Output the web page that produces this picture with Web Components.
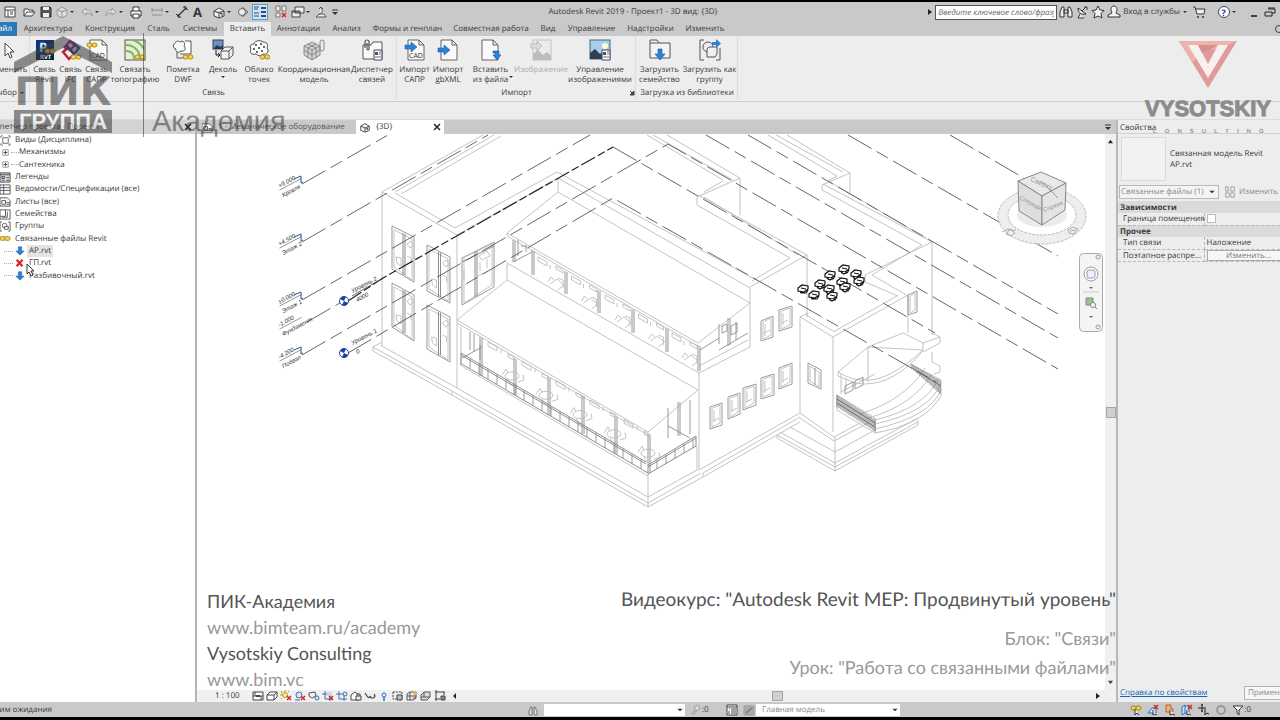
<!DOCTYPE html>
<html lang="ru">
<head>
<meta charset="utf-8">
<title>Autodesk Revit 2019 - Проект1 - 3D вид: {3D}</title>
<style>
html, body { margin: 0; height: 100%; }
body { background: #000; font: 8px/12px "Open Sans", "Noto Sans", sans-serif; color: #3a3a3a; overflow: hidden; text-rendering: geometricPrecision; }
</style>
</head>
<body>
<revit-app></revit-app>
<script>
const G = '#555', Y = '#d9a520', B = '#2f7fd6', R = '#d02a2a';
const chain = (x, y) => `<g fill="#f6d45a" stroke="#b98a10" stroke-width="1"><rect x="${x}" y="${y}" width="5" height="4" rx="2"/><rect x="${x + 5}" y="${y}" width="5" height="4" rx="2"/></g>`;
const page = (x, y, w, h) => `<path d="M${x} ${y}h${w - 5}l5 5v${h - 5}h${-w}zM${x + w - 5} ${y}v5h5" fill="#fafafa" stroke="${G}" stroke-width=".9"/>`;
const arrowR = (x, y) => `<path d="M${x} ${y}h6v-3l6 5-6 5v-3h-6z" fill="${B}" stroke="#1a5aa8" stroke-width=".6"/>`;
const arrowD = (x, y) => `<path d="M${x} ${y}h4v5h3l-5 6-5-6h3z" fill="${B}" stroke="#1a5aa8" stroke-width=".6"/>`;
const redX = (x, y) => `<path d="M${x} ${y}l4 4m0-4l-4 4" stroke="${R}" stroke-width="1.5"/>`;
const house = `<path d="M2 6l5-3 5 3v5l-5 2-5-2zM2 6l5 2 5-2M7 8v5M8 9l2-1v3" fill="#f2f2f2" stroke="#444"/>`;
/* name: [viewBox size, markup] */
const ICONS = {
  pointer: [22, `<path d="M8 4v13l3-3 2 5 2-1-2-5h4z" fill="#fff" stroke="#444"/>`],
  revit: [22, `<rect x="2" y="1" width="18" height="20" fill="#12356f"/><path d="M2 15h18v6H2z" fill="#0a2148"/><text x="5" y="13" font-size="13" font-weight="700" fill="#dbe9fb">P</text><text x="6" y="20" font-size="6" font-weight="700" fill="#fff">RVT</text>${chain(11, 10)}`],
  ifc: [22, `<g fill="none" stroke-width="2.4"><path d="M4 9l6-7 5 4-5 5" stroke="#c01f78"/><path d="M12 3l7 6-5 6-4-4" stroke="#2d4f9e"/><path d="M9 8l-6 5 6 7 4-4" stroke="#c21d38"/><path d="M6 6l8 9" stroke="#5a3090"/></g>${chain(11, 16)}`],
  cadlink: [22, page(4, 1, 17, 20) + `<text x="5" y="19" font-size="7" fill="#222">CAD</text>` + chain(1, 4)],
  topo: [22, `<rect x="1" y="1" width="20" height="20" fill="#e4efd8" stroke="${G}"/><g fill="none" stroke="#7fb45c" stroke-width="2"><path d="M2 6c8 0 14 6 14 14M2 12c5 0 8 3 8 8M9 1c6 2 10 6 12 11"/></g>${chain(11, 16)}`],
  dwf: [22, `<path d="M13 2h6v13H8" fill="#fff" stroke="${G}"/><path d="M4 3c2-2 4 0 4 0 3-2 6 1 4 4 3 3 0 6-3 5-3 3-6 0-5-2-4-1-3-5 0-7z" fill="#f7f7f7" stroke="${G}"/><path d="M5 13v6h6" fill="none" stroke="${G}"/>${chain(11, 16)}`],
  decal: [22, `<rect x="1" y="1" width="10" height="9" fill="#6c93bf" stroke="#345"/><path d="M1 10l4-4 3 2 3-2v4z" fill="#223a52"/><path d="M9 12l4-4h8v8l-4 4H9z" fill="#f2f2f2" stroke="${G}"/><path d="M9 12h8v8m0-8l4-4" fill="none" stroke="${G}"/><path d="M4 11v5h3M6 14l2 2-2 2" fill="none" stroke="#111"/>`],
  cloud: [22, `<path d="M6 5c1-4 7-4 9-2 5 0 5 4 4 6 3 4-1 7-4 6-3 3-6 1-7 0-4 1-7-1-5-5-2-3 0-5 3-5z" fill="#fff" stroke="#444"/><g fill="#333"><circle cx="8" cy="6" r="1"/><circle cx="13" cy="5" r="1"/><circle cx="6" cy="10" r="1"/><circle cx="11" cy="9" r="1"/><circle cx="16" cy="8" r="1"/><circle cx="14" cy="12" r="1"/><circle cx="9" cy="13" r="1"/></g>${chain(12, 16)}`],
  coord: [22, `<g fill="#d2d2d2" stroke="#777" stroke-width=".8"><path d="M1 7l8-4 8 4v9l-8 5-8-5z"/><path d="M1 7l8 4 8-4M9 11v10M1 11l8 5 8-5M5 5l8 4v10M13 5L5 9v10" fill="none"/></g><rect x="17" y="1" width="4" height="11" rx="2" fill="none" stroke="#888"/>`],
  manager: [22, `<path d="M2 20V6h8l2-3h9v17z" fill="#fafafa" stroke="${G}"/><path d="M4 9V3a2 2 0 014 0v7a1 1 0 01-2 0V4" fill="none" stroke="#555" stroke-width="1.2"/><path d="M13 11h8v10h-8z" fill="#fff" stroke="#446"/><path d="M14 13h3v3h-3z" fill="#456"/><path d="M18 13h2M18 15h2M14 18h6" stroke="#667"/>`],
  cadimp: [22, page(4, 1, 16, 20) + `<text x="5" y="19" font-size="7" fill="#222">CAD</text>` + arrowR(1, 6)],
  xmlimp: [22, page(4, 1, 16, 20) + arrowR(1, 9)],
  insert: [22, page(2, 1, 16, 20) + `<path d="M13 12h6v4h2l-4 5-4-5h2v-2h-2z" fill="${B}" stroke="#1a5aa8" stroke-width=".6"/>`],
  image: [22, `<g opacity=".5"><rect x="3" y="1" width="18" height="20" fill="#ececec" stroke="#999"/><path d="M3 21v-6l5-4 5 5 4-3 4 4v4z" fill="#8d8d8d"/><path d="M1 5h6V2l5 5-5 5V9H1z" fill="#ccc" stroke="#888"/></g>`],
  images: [22, `<rect x="1" y="1" width="20" height="19" fill="#a9cdec" stroke="#566"/><circle cx="16" cy="7" r="3" fill="#fff9d8"/><path d="M1 20v-6l5-4 5 5 3-2v7z" fill="#30404e"/><path d="M13 11h8v10h-8z" fill="#fff" stroke="#446"/><path d="M14 13h3v3h-3z" fill="#456"/><path d="M18 13h2M18 15h2M14 18h6" stroke="#667"/>`],
  family: [22, `<path d="M1 19V1h7l2 3h11v15z" fill="#f3f3f3" stroke="${G}"/><path d="M10 4H1" stroke="${G}"/>${arrowD(9, 10)}`],
  group: [22, `<path d="M5 1H1v20h4M17 21h4V9" fill="none" stroke="${G}"/><circle cx="9" cy="8" r="5" fill="none" stroke="${G}"/><path d="M8 10l2-2h8v7l-2 3H8z" fill="#f0f0f0" stroke="${G}"/><path d="M13 3h4V0l5 4.500-5 4.500V6h-4z" fill="${B}"/>`],
  appmenu: [14, `<path d="M2 2h10v10H2zM2 5h10M5 5v7" fill="#fff" stroke="#444"/><path d="M7 7h3M7 9h3" stroke="#444"/>`],
  open: [14, `<path d="M2 11V4h4l1 1h4v2M2 11l3-4h8l-3 4z" fill="#f3f3f3" stroke="#444"/>`],
  save: [14, `<path d="M2 2h9l1 1v9H2z" fill="#555" stroke="#333"/><path d="M4 2h6v3H4zM4 8h6v4H4z" fill="#eee"/>`],
  sync: [14, `<path d="M2 5l5-3 5 3v5l-5 3-5-3zM2 5l5 2 5-2M7 7v6" fill="#ddd" stroke="#999"/>`],
  undo: [14, `<path d="M6 3L2 7l4 3V8c3 0 5 0 6 3 0-4-2-6-6-6z" fill="#ddd" stroke="#999"/>`],
  redo: [14, `<path d="M8 3l4 4-4 3V8c-3 0-5 0-6 3 0-4 2-6 6-6z" fill="#ddd" stroke="#999"/>`],
  print: [14, `<path d="M4 6V2h6v4M2 6h10v5H2z" fill="#fff" stroke="#333"/><path d="M4 9h6v4H4z" fill="#fff" stroke="#333"/>`],
  measure: [14, `<path d="M2 3v4M12 3v4M2 5h10" fill="none" stroke="#888"/><path d="M2 9h10v2H2z" fill="#aaa"/>`],
  dim: [14, `<path d="M3 11l8-8" stroke="#333" stroke-width="1.200"/><path d="M1 9l4 4M9 1l4 4M3 9v3h3M8 2h3v3" stroke="#333"/>`],
  letter: [14, `<text x="2" y="12" font-size="13" font-weight="700" fill="#333">A</text>`],
  house: [14, house],
  section: [14, `<circle cx="6" cy="7" r="3.500" fill="#eee" stroke="#666"/><path d="M6 2l6 5-6 5" fill="none" stroke="#666"/>`],
  thin: [14, `<path d="M1 2h5M1 4h4M1 8h5M1 11h5" stroke="#2b4c74"/><path d="M8 3h5M8 7h5M8 11h5" stroke="#2b4c74" stroke-width="1.800"/>`],
  closeh: [14, `<path d="M2 1h4v5H2zM8 1h4v5H8zM2 8h4v4H2z" fill="#eee" stroke="#777"/>${redX(8, 8)}`],
  windows: [14, `<path d="M4 2h9v6H4zM1 6h8v6H1z" fill="#eee" stroke="#444"/><path d="M1 7h8" stroke="#444"/>`],
  thin2: [14, `<path d="M2 12h10l-2-3H5zM5 9c4-1 4-4 2-6M5 4l2-2 2 2" fill="#eee" stroke="#555"/>`],
  more: [14, `<path d="M4 5h6" stroke="#333"/><path d="M4 7h6l-3 3z" fill="#333"/>`],
  dd: [6, `<path d="M1 2h4L3 4z" fill="#333"/>`],
  right: [6, `<path d="M1 0l4 3-4 3z" fill="#222"/>`],
  left: [6, `<path d="M4 0L1 3l3 3z" fill="#222"/>`],
  up: [6, `<path d="M0 5h6L3 1z" fill="#222"/>`],
  down: [6, `<path d="M0 1h6L3 5z" fill="#444"/>`],
  corner: [6, `<path d="M1 1l3 3M5 1v4H1z" stroke="#444" fill="#444"/>`],
  binoc: [14, `<path d="M1 12V7l2-5h2v10zM9 12V2h2l2 5v5zM5 5h4v3H5z" fill="#eee" stroke="#333"/>`],
  sat: [14, `<path d="M3 3c0 5 3 7 8 6zM7 6l4-4M9 2h3v3M5 9l-2 4h6" fill="#eee" stroke="#333"/>`],
  star: [14, `<path d="M7 1l2 4 4 .5-3 3 1 4.500-4-2-4 2 1-4.500-3-3L5 5z" fill="#f3f3f3" stroke="#333"/>`],
  user: [14, `<path d="M7 1c3 0 3 3 3 4s-1 3-1 3l4 2v2H1v-2l4-2S4 6 4 5s0-4 3-4z" fill="#f3f3f3" stroke="#333"/>`],
  cart: [14, `<path d="M1 2h2l2 7h7l1-5H4" fill="#eee" stroke="#335"/><circle cx="6" cy="12" r="1" fill="#335"/><circle cx="11" cy="12" r="1" fill="#335"/>`],
  help: [14, `<circle cx="7" cy="7" r="5.500" fill="#fff" stroke="#446"/><text x="4.500" y="10.500" font-size="9" font-weight="700" fill="#23409a">?</text>`],
  min: [14, `<path d="M4 11h6" stroke="#222" stroke-width="1.600"/>`],
  restore: [14, `<path d="M5 4h7v4H9M2 7h7v4H2zM5 3h7" fill="none" stroke="#222"/>`],
  close: [8, `<path d="M1 1l6 6M7 1L1 7" stroke="#222" stroke-width="1.500"/>`],
  views: [12, `<path d="M3 3h6v6H3z" fill="#fff" stroke="#666"/><path d="M1 3V1h2M9 1h2v2M11 9v2H9M3 11H1V9" fill="none" stroke="#666"/>`],
  plus: [12, `<path d="M3 3h6v6H3z" fill="#fff" stroke="#999"/><path d="M4 6h4M6 4v4" stroke="#444"/>`],
  legend: [12, `<path d="M0 1h11v10H0z" fill="#ddd" stroke="#444"/><path d="M0 3h11M2 5h3v2H2zM7 6h3M2 9h3M7 9h3" stroke="#444" fill="none"/>`],
  sched: [12, `<path d="M0 1h11v10H0zM0 4h11M0 7h11M4 1v10" fill="#fff" stroke="#555"/>`],
  sheet: [12, `<path d="M0 2h8l3 3v6H0zM2 5h4v4H2zM7 7h4M7 9h4" fill="#fff" stroke="#555"/>`],
  fam: [12, `<path d="M0 1h11v10H0zM6 1v7H0M8 3v6H2" fill="#fff" stroke="#555"/>`],
  grp: [12, `<path d="M2 1H0v10h2M9 1h2v10H9" fill="none" stroke="#555"/><circle cx="5" cy="5" r="2.500" fill="none" stroke="#555"/><path d="M5 6h4v3H5z" fill="#fff" stroke="#555"/>`],
  link: [12, `<g fill="#f6d45a" stroke="#a87d10"><rect x="0" y="4" width="6" height="4" rx="2"/><rect x="5" y="4" width="6" height="4" rx="2"/></g>`],
  loaded: [12, `<path d="M4 1h4v5h3l-5 5-5-5h3z" fill="${B}" stroke="#1a5aa8" stroke-width=".6"/>`],
  missing: [12, `<path d="M2 2l7 8M9 2l-7 8" stroke="#d22" stroke-width="2.600"/>`],
  edittype: [14, `<path d="M2 1h3v5H2zM8 1h4v5H8zM2 8h4v5H2zM8 8h4v5H8z" fill="none" stroke="#999"/>`],
  detail: [12, `<path d="M1 2h10v8H1zM1 6h10M3 2v4M9 6v4" fill="#fff" stroke="#444"/><path d="M4 6h4" stroke="#444" stroke-width="2"/>`],
  style: [12, `<path d="M1 5l3-3h7v5l-3 3H1zM1 5h7v5M8 5l3-3" fill="#fff" stroke="#444"/>`],
  sun: [12, `<circle cx="5" cy="5" r="2.500" fill="#fbe7a0" stroke="#c8961a"/><path d="M5 0v2M0 5h2M1 1l1 2M9 1L8 2M1 9l1-1" stroke="#c8961a"/>${redX(7, 6)}`],
  shadow: [12, `<circle cx="5" cy="5" r="3" fill="#dbe9f7" stroke="#3973ad"/><path d="M1 10h5" stroke="#3973ad"/>${redX(7, 6)}`],
  render: [12, `<path d="M1 3l6-1 1 4-4 2-3-2z" fill="#eee" stroke="#555"/><circle cx="9" cy="8" r="2" fill="#dbe9f7" stroke="#3973ad"/>`],
  cropx: [12, `<path d="M3 1v8h8M0 4h8v7" fill="none" stroke="#3973ad"/><path d="M5 2h5v4H5z" fill="#ccdcec"/>${redX(7, 6)}`],
  crop: [12, `<path d="M3 1v8h8M0 4h8v7" fill="none" stroke="#3973ad"/><circle cx="9" cy="4" r="2" fill="#dbe9f7" stroke="#3973ad"/>`],
  lock: [12, `<path d="M1 5l4-3 4 3v5H1z" fill="#fff" stroke="#444"/><path d="M6 6h5v4H6zM7 6V4h3v2" fill="#eee" stroke="#444"/>`],
  glasses: [12, `<path d="M1 3l2 3c2 3 3 1 3 0 1 3 4 3 5 0l-1-2" fill="none" stroke="#444" stroke-width="1.200"/>`],
  bulb: [12, `<circle cx="6" cy="5" r="2" fill="#eaf3fc" stroke="#2c6cc0"/><path d="M6 7v4" stroke="#2c6cc0" stroke-width="1.500"/>`],
  temp: [12, `<path d="M1 2h9v7H1z" fill="#eee" stroke="#444" stroke-dasharray="2 1"/><path d="M5 5h5v5H5z" fill="#bbb" stroke="#444"/>`],
  analytic: [12, `<path d="M1 4l3-2h6v6l-3 2H1zM1 6h9M4 2v8" fill="#eee" stroke="#555"/><circle cx="9" cy="3" r="2" fill="#f0b050"/><path d="M7 8h3" stroke="#b33"/>`],
  disp: [12, `<path d="M1 5l3-3h6v5l-3 3H1zM1 7h9M4 2v5" fill="#ddd" stroke="#555"/>`],
  constr: [12, `<path d="M1 2h10M2 0v11M1 9h5M10 2v3" stroke="#444" fill="none"/><path d="M7 6h4v4H7z" fill="#888" stroke="#444"/>`],
  press: [12, `<path d="M2 11V7l2-4h1v8zM7 11V3h1l2 4v4z" fill="#ddd" stroke="#777"/>`],
  key: [12, `<path d="M2 10l4-4M4 11l4-5" stroke="#999"/><circle cx="8" cy="4" r="2.500" fill="#ddd" stroke="#999"/>`],
  list: [12, `<path d="M1 1h10v10H1zM1 3h10M3 5h1M5 5h5M5 7h5M5 9h5M3 7v3" fill="#fff" stroke="#444"/>`],
  list2: [12, `<path d="M1 2h10v9H1z" fill="#aaa" stroke="#999"/><path d="M3 9l6-5" stroke="#777" stroke-width="1.500"/>`],
  sel1: [12, `<g fill="#f6d45a" stroke="#a87d10"><rect x="1" y="2" width="5" height="4" rx="2"/><rect x="6" y="2" width="5" height="4" rx="2"/></g><path d="M5 5v6l2-2 2 2" fill="#fff" stroke="#333"/>`],
  sel2: [12, `<path d="M1 9l4-5h4v5z" fill="#cfe2f6" stroke="#2c6cc0"/>${redX(7, 1)}<path d="M6 6v5l2-1 2 1" fill="#fff" stroke="#333"/>`],
  sel3: [12, `<path d="M2 1h5v4h2v3H2z" fill="#f0b27a" stroke="#b5651d"/><path d="M6 6v5l2-1 3 1" fill="#fff" stroke="#333"/>`],
  sel4: [12, `<path d="M1 3l3-2v8l-3 2zM4 2h4v7H4" fill="#cfe2f6" stroke="#2c6cc0"/>${redX(7, 1)}<path d="M6 6v5l2-1 2 1" fill="#fff" stroke="#333"/>`],
  drag: [12, `<path d="M4 0v8M0 4h8M3 1h2M3 7h2M7 5v6l2-2 2 1" stroke="#222" fill="none"/>`],
  gear: [12, `<circle cx="6" cy="6" r="4" fill="none" stroke="#999" stroke-width="1.800"/>`],
  filter: [12, `<path d="M1 2h10L7 6v5l-2-2V6z" fill="#fff" stroke="#333"/>`],
};

/* Base class: each element renders its own open shadow root. */
class El extends HTMLElement {
  connectedCallback() {
    if (this.shadowRoot) return;
    this.attachShadow({ mode: 'open' }).innerHTML = `<style>*{box-sizing:border-box}button,input,select{font:inherit;color:inherit;margin:0;padding:0;border:0;background:none;text-rendering:inherit}${this.css()}</style>${this.html()}`;
  }
  a(n) { return this.getAttribute(n) || ''; }
}
const def = (name, css, html) => customElements.define(name, class extends El {
  css() { return css; }
  html() { return html(this); }
});
const ic = (n, s) => `<rv-icon name="${n}" style="--s:${s || (ICONS[n][0])}px"></rv-icon>`;

def('rv-icon', `:host{display:block;flex:none;width:var(--s);height:var(--s)}svg{display:block;width:100%;height:100%}`,
  e => { const [v, m] = ICONS[e.a('name')]; return `<svg viewBox="0 0 ${v} ${v}" fill="none" font-family="Open Sans, sans-serif" aria-hidden="true">${m}</svg>`; });

def('quick-access', `
:host{display:flex;align-items:center;height:20px;background:#c9c9c9;position:relative;padding-left:3px}
.tools,.right{display:flex;align-items:center}
.tools button{margin-right:var(--g)}
button{display:flex;align-items:center}
.on{background:#cfe4f7;outline:1px solid #5a9bd5}
h1{position:absolute;left:0;right:0;text-align:center;margin:0;font:inherit;pointer-events:none;padding-right:14px}
.right{margin-left:auto;gap:2px;padding-right:3px}
.cart{margin-left:2px}.help{margin-left:9px}.min{margin-left:8px}
input{width:122px;height:15px;background:#fff;border:1px solid #555;padding:0 2px;font-style:italic}
input::placeholder{color:#666;opacity:1}
`, () => {
  const t = [['appmenu', 0, 5], ['open', 0, 3], ['save', 0, 2], ['sync', 1, 5], ['undo', 1, 4], ['redo', 1, 5], ['print', 0, 7], ['measure', 1, 5], ['dim', 0, 2], ['letter', 0, 7], ['house', 1, 4], ['section', 0, 3], ['thin', 0, 7], ['closeh', 0, 3], ['windows', 1, 3], ['thin2', 0, 0], ['more', 0, 0]];
  return `<div class="tools">${t.map(([n, d, g]) => `<button ${n === 'thin' ? 'class="on"' : ''} aria-label="${n}" style="--g:${g}px">${ic(n)}${d ? ic('dd') : ''}</button>`).join('')}</div>
<h1>Autodesk Revit 2019 - Проект1 - 3D вид: {3D}</h1>
<div class="right"><button aria-label="Развернуть">${ic('right')}</button><input aria-label="Поиск" placeholder="Введите ключевое слово/фразу"><button aria-label="Найти">${ic('binoc')}</button><button aria-label="Связь">${ic('sat')}</button><button aria-label="Избранное">${ic('star')}</button><button>${ic('user')}&nbsp;Вход в службы&nbsp;${ic('dd')}</button><button aria-label="Магазин" class="cart">${ic('cart')}</button><button aria-label="Справка" class="help">${ic('help')}${ic('dd')}</button><button aria-label="Свернуть" class="min">${ic('min')}</button><button aria-label="Восстановить">${ic('restore')}</button></div>`;
});

def('ribbon-tabs', `
:host{display:flex;height:14px;background:#c9c9c9;align-items:stretch}
button{width:var(--w);text-align:center;line-height:14px;white-space:nowrap}
.file{width:17px;background:#2a7ab8;color:#fff;display:flex;justify-content:flex-end;padding-right:5px;overflow:hidden}
.on{background:#ededed}
.end{margin-left:auto;width:5px;height:14px;overflow:hidden}
.end i{display:block;width:8px;height:8px;margin-top:3px;border:1px solid #444;border-radius:4px}
`, () => `<button class="file">Файл</button>` + [['Архитектура', 62], ['Конструкция', 62], ['Сталь', 35], ['Системы', 48], ['Вставить', 47], ['Аннотации', 55], ['Анализ', 41], ['Формы и генплан', 81], ['Совместная работа', 86], ['Вид', 28], ['Управление', 59], ['Надстройки', 59], ['Изменить', 50]].map(([t, w]) => `<button style="--w:${w}px" ${t === 'Вставить' ? 'class="on"' : ''}>${t}</button>`).join('') + `<span class="end"><i></i></span>`);

def('ribbon-button', `
:host{display:block;flex:none;width:var(--w)}
button{width:100%;display:flex;flex-direction:column;align-items:center;line-height:10px;white-space:nowrap;gap:4px;position:relative}
span{white-space:pre;text-align:center}
:host([disabled]) button{color:#aaa}
.dd{position:absolute;right:2px;bottom:5px}
.below{margin-top:-5px}
`, e => `<button ${e.hasAttribute('disabled') ? 'disabled' : ''}>${ic(e.a('icon'))}<span>${e.a('label').replace('|', '<br>')}</span>${e.hasAttribute('drop') ? `<div class="dd">${ic('dd')}</div>` : ''}${e.hasAttribute('under') ? `<div class="below">${ic('dd')}</div>` : ''}</button>`);

def('ribbon-panel', `
:host{display:flex;flex-direction:column;flex:none;width:var(--w);border-right:1px solid #dcdcdc;padding:3px 0 2px 1px;height:64px}
.row{display:flex;flex:1}
.foot{display:flex;justify-content:center;align-items:center;line-height:10px;white-space:nowrap}
:host([cut]){overflow:hidden}
:host([cut]) .row{margin-left:-19px}
:host([cut]) .foot{justify-content:flex-end;padding-right:4px}
.launch{margin-left:auto}
.foot.l::before{content:"";width:6px;margin-right:auto}
`, e => `<div class="row"><slot></slot></div><div class="foot ${e.hasAttribute('launch') ? 'l' : ''}">${e.a('title-text')}${e.hasAttribute('cut') ? '&nbsp;' + ic('dd') : ''}${e.hasAttribute('launch') ? `<span class="launch">${ic('corner')}</span>` : ''}</div>`);

def('revit-ribbon', `
:host{display:block;background:#ededed}
.panels{display:flex;height:66px;border-bottom:1px solid #cfcfcf}
.options{height:18px;border-bottom:1px solid #dcdcdc}
`, () => {
  const b = (i, l, w, x = '') => `<ribbon-button icon="${i}" label="${l}" style="--w:${w}px" ${x}></ribbon-button>`;
  return `<div class="panels">
<ribbon-panel cut title-text="Выбор" style="--w:30px">${b('pointer', 'Изменить', 52)}</ribbon-panel>
<ribbon-panel title-text="Связь" style="--w:367px">${b('revit', 'Связь|Revit', 27)}${b('ifc', 'Связь|IFC', 25)}${b('cadlink', 'Связь|САПР', 27)}${b('topo', 'Связать|топографию', 50)}${b('dwf', 'Пометка|DWF', 46)}${b('decal', 'Деколь', 34, 'under')}${b('cloud', 'Облако|точек', 38)}${b('coord', 'Координационная|модель', 72)}${b('manager', 'Диспетчер|связей', 44)}</ribbon-panel>
<ribbon-panel launch title-text="Импорт" style="--w:239px">${b('cadimp', 'Импорт|САПР', 33)}${b('xmlimp', 'Импорт|gbXML', 34)}${b('insert', 'Вставить|из файла', 51, 'drop')}${b('image', 'Изображение', 50, 'disabled')}${b('images', 'Управление|изображениями', 68)}</ribbon-panel>
<ribbon-panel title-text="Загрузка из библиотеки" style="--w:102px">${b('family', 'Загрузить|семейство', 45)}${b('group', 'Загрузить как|группу', 55)}</ribbon-panel>
</div><div class="options"></div>`;
});

def('project-browser', `
:host{display:flex;flex-direction:column;width:197px;flex:none;background:#fff;border-right:2px solid #b4b4b4;overflow:hidden}
header{display:flex;height:14px;align-items:center;background:#d4d4d4;justify-content:space-between;padding-right:3px}
header span{display:flex;justify-content:flex-end;width:100px;white-space:nowrap}
ul{list-style:none;margin:0;padding:0;display:grid;grid-auto-rows:1fr;height:148px}
li{display:flex;align-items:center;gap:4px;padding-left:var(--p);white-space:nowrap}
.sub{gap:0}.sub::before,.file::before{content:"";order:1;width:8px;border-top:1px dotted #aaa}
.file::before{order:0;width:9px}
.file{gap:2px}
.file span{padding:0 2px}
.file .sel{background:#e4e4e4}
.sub span{order:2}
`, () => `<header><span>Диспетчер проекта - Проект1</span>${ic('close')}</header><ul>` +
  [['views', 'Виды (Дисциплина)', ''], ['plus', 'Механизмы', 'sub'], ['plus', 'Сантехника', 'sub'], ['legend', 'Легенды', ''], ['sched', 'Ведомости/Спецификации (все)', ''], ['sheet', 'Листы (все)', ''], ['fam', 'Семейства', ''], ['grp', 'Группы', ''], ['link', 'Связанные файлы Revit', ''], ['loaded', 'АР.rvt', 'file'], ['missing', 'ГП.rvt', 'file'], ['loaded', 'Разбивочный.rvt', 'file']]
  .map(([i, t, c]) => `<li class="${c}" style="--p:${c === 'file' ? 4 : 0}px">${ic(i, i === 'loaded' || i === 'missing' ? 10 : 11)}<span ${t === 'АР.rvt' ? 'class="sel"' : ''}>${t}</span></li>`).join('') + `</ul>`);

def('doc-tabs', `
:host{display:flex;height:14px;background:#c9c9c9;align-items:stretch;padding-left:2px}
button{display:flex;align-items:center;white-space:nowrap;gap:5px;padding:0 3px}
.one{width:157px;color:#555}.two{width:88px;background:#fff}
.two rv-icon:last-child{margin-left:auto}
.menu{margin-left:auto;padding:0 1px}
`, () => `<button class="one">${ic('sheet', 11)}<span>1 - Механическое оборудование</span></button><button class="two">${ic('house', 12)}<span>{3D}</span>${ic('close', 8)}</button><button class="menu" aria-label="Список вкладок">${ic('more', 14)}</button>`);

const P = (pts, x = '') => `<path d="${pts}" ${x}/>`;
const quad = (a, inset) => { // window frame with an inner sash
  const [x1, y1, x2, y2, x3, y3, x4, y4] = a, k = inset;
  return `<path d="M${x1} ${y1}L${x2} ${y2} ${x3} ${y3} ${x4} ${y4}z" stroke="#8f8f8f"/><path d="M${x1 + k} ${y1 + k + (y2 - y1) / 6}L${x2 - k} ${y2 + k} ${x3 - k} ${y3 - k} ${x4 + k} ${y4 - k}z"/>`;
};
function model() {
  let s = '';
  const edges = 'M382 347V192L483 135M395 192L494 135M401 194L501 136M382 192L457 235 558 178M395 193L455 228 557 172M457 235V388M557 172L762 283M558 178L750 288V347M558 178V192L750 303M558 192L507 233 698 343 750 303M507 236L698 346M507 233V236M507 263L699 373 750 347M507 263V280L698 390M507 280L457 320 648 432 698 390M457 323L648 435M699 366L748 340M699 373V470M382 346L457 388 648 497 697 470V446M373 347L452 391 648 503 701 473M373 347V351L452 395 648 507 703 477 800 422M373 347L382 342M452 391V395M648 473V507M703 473V477M460 365L648 476M461 327V365M699 470L800 413M703 473L800 417M667 135L740 178V215M653 135L733 180M647 135L723 180M740 178L697 197V205L790 258M698 195L807 255V317M704 197L798 255M723 181L704 192M807 255L750 287M790 258L752 281M787 135L850 173V193M776 135L843 172M768 135L837 176M850 173L822 185V190L922 245M823 184L932 242V335M830 182L926 238M837 176L828 181M932 242L865 275V282L898 296M922 245L872 275 908 296M833 337L908 295V333M833 332L897 296M800 413V317L833 337V432M806 315L833 331M800 317L808 313M800 413L834 437 860 423M800 418L834 441 868 423M790 427L835 452 875 430M780 432L835 463 918 418M777 435L835 467 918 422M777 438L835 471 918 425V420M835 437V471M777 435V438M838 372L868 347 903 333 923 343V350C915 362 898 376 880 382Q862 386 853 382L838 376V372Q852 381 868 380Q890 380 923 350M868 347V382M868 347L923 350M932 333L940 337V343L923 352M932 352V362M932 362L940 366V372L934 374M923 343L940 337M841 374V394M846 378V390M841 392L875 374M875 420Q925 408 939 378M875 424Q930 412 941 383M875 429Q932 416 941 389M875 433Q925 424 941 396V380M860 414Q905 400 925 368M868 418Q912 406 932 374M837 395V410L875 433V418L837 395M910 364L941 380';
  s += P(edges);
  // windows of the left wing and the facade
  [[392, 226, 414, 237, 414, 282, 392, 269], [392, 283, 414, 295, 414, 341, 392, 327], [427, 245, 450, 257, 450, 303, 427, 291], [427, 305, 450, 317, 450, 362, 427, 349]].forEach(a => {
    const m = (a[0] + a[2]) / 2;
    s += quad(a, 2) + `<path d="M${m} ${a[1] + 7}V${a[7] + 6}M${m + 2} ${a[1] + 8}V${a[7] + 6}" stroke="#808080"/><path d="M${m + 4} ${a[1] + 18}l4-3 3 4-4 3zM${m + 4} ${a[1] + 30}l4 2v5M${m - 7} ${a[7] - 12}l5 1v8l-4-3z"/>`;
  });
  s += quad([462, 258, 494, 242, 494, 287, 462, 305], 2) + '<path d="M475 252V297M477 251V296M462 262L494 246" stroke="#808080"/><path d="M479 256l8-5 3 5-8 4zM480 262v9M487 259v9M478 276l10-5M464 270v10"/>';
  [[710, 407, 722, 403, 722, 425, 710, 429], [728, 397, 740, 393, 740, 414, 728, 419], [743, 388, 756, 384, 756, 405, 743, 410], [761, 378, 774, 374, 774, 395, 761, 399], [779, 368, 792, 363, 792, 384, 779, 389], [761, 321, 773, 316, 773, 337, 761, 341], [779, 310, 792, 306, 792, 327, 779, 331]].forEach(a => { s += quad(a, 2) + `<path d="M${a[0] + 3} ${a[7] - 8}l6-3M${a[0] + 4} ${a[1] + 3}v12"/>`; });
  s += quad([808, 363, 821, 370, 821, 389, 808, 383], 2) + quad([908, 295, 917, 291, 917, 312, 908, 315], 2) + '<path d="M815 368V385M845 386l8-4v8l-8 4zM855 381l8-4v8l-8 4z" stroke="#8f8f8f"/>';
  // posts, beams and cafe tables of both terraces
  [[513, 240, 262], [532, 250, 275], [565, 271, 294], [598, 290, 313], [632, 309, 333], [666, 328, 352], [698, 345, 371], [480, 337, 376], [514, 358, 395], [548, 377, 415], [582, 395, 434], [615, 416, 454], [648, 434, 473]].forEach(([x, a, b]) => {
    s += `<path d="M${x} ${a}V${b}M${x + 2} ${a + 1}V${b}" stroke="#888"/>`;
  });
  for (let i = 0; i < 5; i++) {
    const x = 482 + i * 34, y = 338 + i * 19.3;
    s += `<path d="M${x + 6} ${y + 4}l9 5v4l-9-5zM${x + 26} ${y + 16}l6 3v3l-6-3zM${x + 19} ${y + 11}v4"/><ellipse cx="${x + 30}" cy="${y + 38}" rx="7" ry="4"/><path d="M${x + 20} ${y + 37}l4-6 2 4M${x + 36} ${y + 44}l6-2-1-5M${x + 26} ${y + 42}l3 5 5-1"/>`;
    const u = 534 + i * 33.5, v = 254 + i * 19;
    s += `<path d="M${u + 4} ${v + 3}l9 5v4l-9-5zM${u + 22} ${v + 12}l7 4v3l-7-4zM${u + 16} ${v + 11}v4M${u + 16} ${v + 30}l7-5 7 6-6 5M${u + 14} ${v + 28}l3-5 3 3M${u + 24} ${v + 24}l5 2v8"/>`;
  }
  s += '<path d="M513 262L532 252M518 240V256M526 246V252M521 246h6M719 324V344M728 318V346M730 318V345M736 322V340M719 350L748 333M700 350L719 338M722 326l5-2v7l-5 2zM731 326l6-3v9l-6 3z" stroke="#8f8f8f"/><path d="M668 408V438M678 402V436M680 402V436M690 400V434M668 426L690 438M480 345V360M462 358L482 347M470 332V350M474 334V352" stroke="#8f8f8f"/>';
  // railings
  s += '<path d="M461 353L646 462M461 355L646 464M460 363L648 473M648 465L696 436M648 467L696 438M648 474L696 446M696 436V446" stroke="#808080"/>';
  for (let x = 461; x < 648; x += 9) s += `<path d="M${x} ${353 + (x - 461) * .589}v10" stroke="#8f8f8f"/>`;
  for (let x = 657; x < 696; x += 9) s += `<path d="M${x} ${460 - (x - 657) * .6}v9" stroke="#8f8f8f"/>`;
  for (let x = 837; x < 876; x += 2) s += `<path d="M${x} ${395 + (x - 837) * .64}v12" stroke="#666"/>`;
  for (let x = 912; x < 942; x += 2) s += `<path d="M${x} ${364 + (x - 912) * .58}v${5 + (x - 912) * .3}" stroke="#666"/>`;
  s += '<path d="M837 399L875 423M837 403L875 427M912 368L941 386" stroke="#666"/>';
  return s;
}
function furniture() {
  return [[803, 289], [814, 295], [820, 284], [830, 275], [844, 269], [829, 289], [832, 296], [842, 282], [845, 287], [856, 274], [859, 281]]
    .map(([x, y], i) => `<path d="M${x - 5} ${y - 1}l4-3 6 1v3l-4 3-6-1zM${x - 3} ${y + 2}l1 2 5 0 2-3M${x - 2} ${y - 1}l5 1"/>${i > 1 ? `<path d="M${x - 3} ${y + 3}l3 2 3-2"/>` : ''}`).join('');
}
const mark = (x, y, v, n, blue) => `<g transform="translate(${x} ${y}) rotate(-28)"><text x="1" y="-3">${v}</text><text x="0" y="7">${n}</text><path d="M0 -1H25" stroke="#777" stroke-width=".7"/></g>${blue ? `<path d="M${x + 14} ${y - 12}l7-3v7l2-1" stroke="#34508f" fill="none"/>` : ''}`;
const head = (x, y) => `<circle cx="${x}" cy="${y}" r="4.500" fill="#fff" stroke="#1c3fa0"/><path d="M${x} ${y}V${y - 4.5}A4.500 4.500 0 00${x - 4.5} ${y}zM${x} ${y}V${y + 4.5}A4.500 4.500 0 00${x + 4.5} ${y}z" fill="#1c3fa0" transform="rotate(25 ${x} ${y})"/>`;

def('model-view', `
:host{display:block;position:relative;flex:1;min-width:0;background:#fff;overflow:hidden}
svg{display:block;width:100%;height:100%}
`, () => `<svg viewBox="197 134 908 556" preserveAspectRatio="xMinYMin slice" font-family="Liberation Sans, sans-serif" fill="none">
<g stroke="#bcbcbc" stroke-width=".9">${model()}</g>
<g stroke="#555" stroke-width=".9" stroke-dasharray="27 6 13 6"><path d="M302 184L388 135M302 242L488 135M302 300L590 135M307 322L383 278M302 355L668 144 1058 369M348 353L613 198 936 382M613 147L935 333M706 135L1058 338M748 135L1058 314M848 135L1058 256M950 135L1058 198"/></g>
<path d="M348 301L383 278 613 147" stroke="#222" stroke-width="1.200" stroke-dasharray="16 3 8 3"/>
<g stroke="#111" stroke-width="1.200" fill="#fff">${furniture()}</g>
<g font-size="6" font-style="italic" fill="#333">${mark(280, 191, '+9.000', 'Кровля', 1)}${mark(280, 249, '+4.500', 'Этаж 2', 1)}${mark(280, 307, '±0.000', 'Этаж 1', 1)}${mark(280, 330, '-1.000', 'Фундамент', 0)}${mark(280, 362, '-4.200', 'Подвал', 1)}
<g transform="translate(353 294) rotate(-28)"><text x="0" y="-1">Уровень 2</text><text x="0" y="9">4000</text></g><g transform="translate(353 346) rotate(-28)"><text x="0" y="-1">Уровень 1</text><text x="0" y="9">0</text></g></g>
${head(344, 301)}${head(344, 353)}
<path d="M998 216a44 28 0 1088 0a44 28 0 10-88 0M1008 215a34 20 0 1168 0a34 20 0 11-68 0" fill="#eee" fill-rule="evenodd" stroke="#bbb" stroke-dasharray="3 1"/>
<ellipse cx="1042" cy="215" rx="25" ry="12" fill="#ddd" opacity=".6"/>
<g stroke="#888" fill="#e9e9e9"><path d="M1018 181L1041 172 1066 183 1042 196z"/><path d="M1018 181L1042 196V225L1019 211z" fill="#dedede"/><path d="M1066 183L1042 196V225L1065 210z" fill="#e4e4e4"/></g>
<g font-size="7" fill="#999"><text transform="translate(1030 181) rotate(22)">Сверху</text><text transform="translate(1019 199) rotate(28)" font-size="6">Спереди</text><text transform="translate(1044 212) rotate(-22)" font-size="6">Справа</text></g>
<g stroke="#999" stroke-width=".8"><path d="M1002 232l6-3 6 2 2-2M1006 234l4-5 5 4-4 3zM1068 230l5-3 5 2-4 5-5-1zM1070 231l6-1"/></g>
<path d="M1041 181L1058 198" stroke="#777" stroke-width=".7"/>
<rect x="1079.500" y="253.500" width="23" height="78" rx="4" fill="#f4f4f4" stroke="#aaa"/>
<g stroke="#999"><circle cx="1098" cy="257" r="2"/><circle cx="1098" cy="327" r="2"/><circle cx="1091" cy="274" r="7" fill="#fff"/><rect x="1087" y="270" width="8" height="8" rx="2" fill="#eef"/><path d="M1083 292H1099" stroke="#ccc"/></g>
<path d="M1086 298h7v7h-7z" fill="#9dc08c" stroke="#789"/><circle cx="1093" cy="305" r="2.500" fill="#fff" stroke="#688"/><path d="M1095 307l2 2" stroke="#688"/><path d="M1089 287h4l-2 2zM1089 316h4l-2 2z" fill="#666"/>
</svg>`);

def('view-controls', `
:host{display:flex;height:12px;background:#f0f0f0;align-items:center;padding-left:18px}
span.s{width:37px;white-space:nowrap}
.i{display:flex;gap:2px;margin-right:6px}
.bar{flex:1;display:flex;justify-content:flex-end;align-items:center;gap:312px;padding-right:15px}
b{width:11px;height:10px;background:#d0d0d0;border:1px solid #a5a5a5}
`, () => `<span class="s">1 : 100</span><div class="i">${'detail style sun shadow render cropx crop lock glasses bulb temp analytic disp constr'.split(' ').map(n => ic(n, 12)).join('')}</div>${ic('left', 6)}<div class="bar"><b></b>${ic('right', 6)}</div>`);

def('document-area', `
:host{display:flex;flex-direction:column;flex:1;min-width:0;background:#fff;border-right:2px solid #b8b8b8}
.v{display:flex;flex:1;min-height:0}
.sb{width:11px;background:#f0f0f0;display:flex;flex-direction:column;justify-content:space-between;align-items:center;padding:5px 0}
.sb b{width:10px;height:11px;background:#d0d0d0;border:1px solid #a5a5a5}
`, () => `<doc-tabs></doc-tabs><div class="v"><model-view></model-view><div class="sb">${ic('up', 5)}<b></b>${ic('down', 5)}</div></div><view-controls></view-controls>`);

def('properties-palette', `
:host{display:flex;flex-direction:column;width:162px;flex:none;background:#ededed;overflow:hidden;white-space:nowrap}
header{height:14px;line-height:15px;padding-left:2px;border-bottom:1px solid #d0d0d0}
.type{display:flex;align-items:center;gap:4px;padding:3px 3px;height:50px;line-height:11px}
.type i{width:45px;height:44px;border:1px solid #dadada;background:#f1f1f1}
.pick{display:flex;align-items:center;gap:5px;padding:0 0 2px 1px;height:17px;color:#888}
.sel{position:relative;width:100px;height:14px;border:1px solid #b9b9b9;background:#f4f4f4;flex:none;display:flex;align-items:center;justify-content:space-between;padding-right:2px}
select{appearance:none;width:88px;padding-left:1px;outline:0}
.pick button{display:flex;align-items:center;gap:3px}
table{border-collapse:collapse;width:100%;table-layout:fixed;line-height:11px}
col.k{width:86px}
tr{height:12px}
th{background:#dadada;text-align:left;padding:0 0 0 2px}
td{padding:0;border-bottom:1px dashed #b8b8b8}
td:first-child{padding-left:5px;border-right:1px dashed #b8b8b8}
td:last-child{padding-left:2px}
input{display:block;appearance:none;width:9px;height:9px;background:#fff;border:1px solid #bbb}
td button{display:block;width:84px;height:11px;line-height:9px;background:#f6f6f6;border:1px solid #aaa;color:#777;text-align:center}
td:has(button){padding:0}
footer{margin-top:auto;display:flex;align-items:center;justify-content:space-between;padding:0 0 2px 2px}
a{color:#1464b4}
footer button{height:14px;width:36px;overflow:hidden;border:1px solid #b4b4b4;background:#f6f6f6;color:#888;padding-left:3px;text-align:left;border-right:0}
`, () => `<header>Свойства</header><div class="type"><i></i><div>Связанная модель Revit<br>АР.rvt</div></div>
<div class="pick"><div class="sel"><select aria-label="Выбор элементов"><option>Связанные файлы (1)</option></select>${ic('dd', 8)}</div><button>${ic('edittype', 12)}Изменить тип</button></div>
<table><col class="k"><col><tr><th colspan="2">Зависимости</th></tr><tr><td><label for="rb">Граница помещения</label></td><td><input id="rb" type="checkbox"></td></tr><tr><th colspan="2">Прочее</th></tr><tr><td>Тип связи</td><td>Наложение</td></tr><tr><td>Поэтапное распре...</td><td><button>Изменить...</button></td></tr></table>
<footer><a href="#help">Справка по свойствам</a><button>Применить</button></footer>`);

def('status-bar', `
:host{display:flex;height:15px;background:#c9c9c9;align-items:center;white-space:nowrap;overflow:hidden}
.msg{display:flex;justify-content:flex-end;width:52px;margin-right:475px}
.box{display:flex;align-items:center;justify-content:space-between;height:12px;background:#fff;color:#888;padding-right:1px}
.set{width:141px;margin:0 4px 0 5px}.opt{width:144px;margin-left:1px}
select{appearance:none;outline:0;padding-left:6px;flex:1;min-width:0}
.grp{display:flex;align-items:center;gap:5px}
.edit{gap:1px;width:37px}
.end{margin-left:auto;padding-right:29px}
.end span{display:flex}
`, () => `<div class="msg">Режим ожидания</div>${ic('press', 12)}<div class="box set"><select aria-label="Рабочий набор"><option></option></select>${ic('dd', 8)}</div><div class="grp edit">${ic('key', 12)}<span>:0</span></div><div class="grp">${ic('list', 12)}${ic('list2', 12)}</div><div class="box opt"><select aria-label="Вариант конструкции"><option>Главная модель</option></select>${ic('dd', 8)}</div>
<div class="grp end">${'sel1 sel2 sel3 sel4 drag gear'.split(' ').map(n => ic(n, 12)).join('')}<span>${ic('filter', 12)}:0</span></div>`);

def('pik-watermark', `
:host{position:absolute;left:14px;top:33px;display:flex;opacity:.56;pointer-events:none;color:#3c3c3c}
.logo{width:98px;padding-top:3px}
svg{display:block}
.pik{font:700 39px/37px "DejaVu Sans",sans-serif;display:flex;justify-content:center;height:36px}
.grp{background:#3c3c3c;color:#f8f8f8;font:700 22px/24px "Liberation Sans",sans-serif;text-align:center;height:23px}
.ac{border-left:1px solid #333;height:104px;margin-left:31px;padding:73px 0 0 8px;font:29px/33px "Liberation Sans",sans-serif}
`, () => `<div class="logo"><svg width="98" height="38" viewBox="0 0 98 38"><path d="M0 26L49 0 98 26V37L49 12 0 37z" fill="#3c3c3c"/></svg><div class="pik">ПИК</div><div class="grp">ГРУППА</div></div><div class="ac">Академия</div>`);

def('vysotskiy-watermark', `
:host{position:absolute;right:8px;top:41px;width:128px;display:flex;flex-direction:column;align-items:center;pointer-events:none}
b{font:700 22px/24px "Liberation Sans",sans-serif;color:#8c8c8c;-webkit-text-stroke:1px #8c8c8c;margin-top:9px}
small{font:700 6px/8px "Liberation Sans",sans-serif;letter-spacing:8px;color:#999;margin-top:7px;padding-left:8px;white-space:nowrap}
`, () => `<svg width="58" height="47" viewBox="0 0 58 47"><path d="M0 0H58L29 47z" fill="#df9a9c"/><path d="M0 0H58L40 8Q22 8 14 22z" fill="#ebb5aa"/><path d="M9 4H19L29 23 39 4H49L29 37z" fill="#f7f0ee"/><path d="M19 4H39L29 10 23 12z" fill="#d98e8e"/></svg><b>VYSOTSKIY</b><small>CONSULTING</small>`);

def('course-captions', `
:host{position:absolute;left:207px;right:164px;bottom:28px;display:flex;justify-content:space-between;pointer-events:none;font:400 18px/26px Lato,"Open Sans",sans-serif;color:#555}
div{display:flex;flex-direction:column;white-space:nowrap}
.r{text-align:right;line-height:29px}
.m{color:#999}
.big{font-size:19px;line-height:24px;margin-bottom:12px}
`, () => `<div><span>ПИК-Академия</span><span class="m">www.bimteam.ru/academy</span><span>Vysotskiy Consulting</span><span class="m">www.bim.vc</span></div><div class="r"><span class="big">Видеокурс: "Autodesk Revit MEP: Продвинутый уровень"</span><span class="m">Блок: "Связи"</span><span class="m">Урок: "Работа со связанными файлами"</span></div>`);

def('mouse-pointer', `:host{position:absolute;left:26px;top:263px;pointer-events:none}svg{display:block}`,
  () => `<svg width="10" height="14" viewBox="0 0 10 14"><path d="M1 1v10l2-2 2 4 2-1-2-4h3z" fill="#fff" stroke="#333"/></svg>`);

def('revit-app', `
:host{box-sizing:border-box;display:flex;flex-direction:column;height:100vh;padding:2px 0 3px;position:relative;overflow:hidden}
main{display:flex;flex:1;min-height:0}
`, () => `<quick-access></quick-access><ribbon-tabs></ribbon-tabs><revit-ribbon></revit-ribbon><main><project-browser></project-browser><document-area></document-area><properties-palette></properties-palette></main><status-bar></status-bar><pik-watermark></pik-watermark><vysotskiy-watermark></vysotskiy-watermark><course-captions></course-captions><mouse-pointer></mouse-pointer>`);
</script>
</body>
</html>
